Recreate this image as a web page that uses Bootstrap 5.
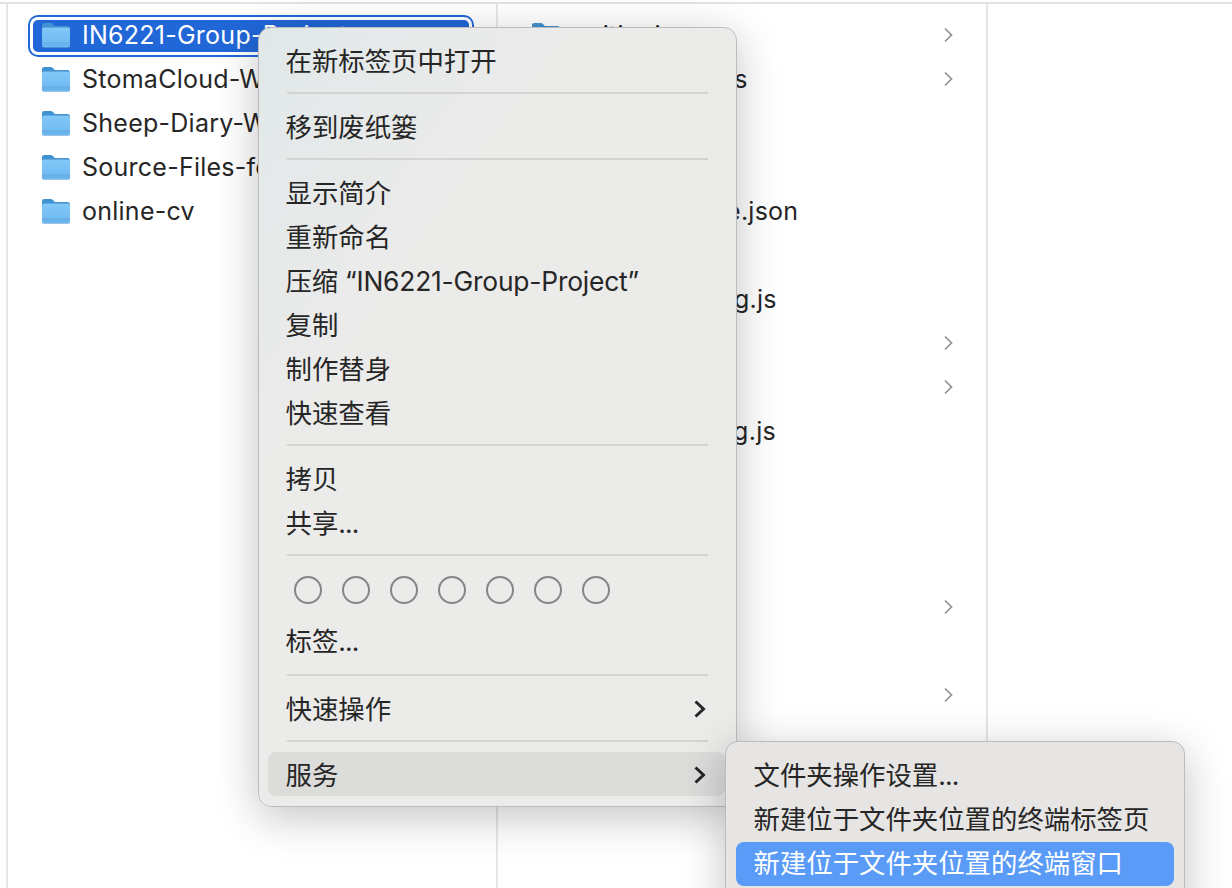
<!DOCTYPE html>
<html lang="zh-CN">

<head>
    <meta charset="UTF-8">
    <title>Finder</title>
    <meta name="viewport" content="width=device-width, initial-scale=1">
    <link href="https://cdn.jsdelivr.net/npm/bootstrap@5.3.0/dist/css/bootstrap.min.css" rel="stylesheet">
    <style>
        html, body { height: 888px; overflow: hidden; background: #fff; }
        body { font-family: Inter, "Noto Sans CJK SC", sans-serif; color: #262626; }
        .finder { height: 888px; margin-top: 2px; border-top: 2px solid #e4e4e4; }
        .edge { width: 8px; border-right: 2px solid #e6e6e6; }
        .pane { width: 490px; padding-top: 9px; border-right: 2px solid #e6e6e6; }
        .fi-row { height: 44px; padding: 5px 27px 5px 25px; font-size: 25px; letter-spacing: .25px; }
        .fi-inner { height: 34px; padding: 2px 0 0 8px; border-radius: 5px; white-space: nowrap; overflow: hidden; }
        .fi-inner svg.fold { width: 30px; height: 28px; margin: 0 11px 2px 0; flex: none; }
        .fi-inner.fi-sel {
            height: 32px; margin-top: 2px; padding-top: 0; overflow: visible; background: #2167d8; color: #fff;
            box-shadow: 0 0 0 3px #fff, 0 0 0 5px #2167d8;
        }
        .fi-more { width: 12px; height: 18px; margin: 0 5px 2px auto; flex: none; }
        .ctx.dropdown-menu {
            --bs-dropdown-min-width: 0;
            left: 258px; top: 27px; width: 479px; height: 780px; padding: 12px 0;
            font-size: 26.4px; color: #262626;
            background: linear-gradient(125deg, #e1e8e9 0, #ebebea 30%);
            border: 1px solid #bcbcbc; border-radius: 13px;
            box-shadow: 0 10px 44px rgba(0, 0, 0, .24);
        }
        .ctx .dropdown-item {
            height: 44px; padding: 0 12px 0 17.5px; margin: 0 11px 0 9px; width: auto; line-height: 42px;
            color: #262626; border-radius: 8px; letter-spacing: 0;
        }
        .ctx .dropdown-item.d-flex { padding: 2px 18px 0 17.5px; line-height: 42px; }
        .ctx .dropdown-divider { height: 2px; margin: 8px 28px 12px; border-top: 2px solid #d3d3d2; opacity: 1; }
        .ctx .divider-low { margin: 10px 28px; }
        .ctx .item-open { background: #dcdcdb; }
        .ctx .item-arrow { width: 14px; height: 20px; }
        .ctx .item-zip { letter-spacing: -.2px; }
        .ctx .dots { letter-spacing: -.9px; }
        .tag-row { height: 52px; padding: 8px 0 0 35px; gap: 20px; }
        .tag-dot { width: 28px; height: 28px; border: 2px solid #868686; border-radius: 50%; }
        .ctx.sub.dropdown-menu {
            left: 725px; top: 741px; width: 460px; height: 180px; background: #e6e5e3;
        }
        .ctx.sub .dropdown-item { margin: 0 10px; }
        .ctx.sub .dropdown-item.active { background: #5a9bf8; color: #fff; }
    </style>
</head>

<body>
    <svg width="0" height="0" class="position-absolute">
        <defs>
            <linearGradient id="foldBody" x1="0" y1="0" x2="0" y2="1">
                <stop offset="0" stop-color="#82c8f8"></stop>
                <stop offset="1" stop-color="#6db8f2"></stop>
            </linearGradient>
            <symbol id="fold" viewBox="0 0 30 28">
                <path d="M1 4.5C1 2.8 2 2 3.5 2h6.2c1 0 1.7.4 2.3 1l1.8 1.9h12.7c1.5 0 2.5 1 2.5 2.5V10H1z" fill="#3f92d4"></path>
                <rect x="1" y="6.5" width="28" height="20.5" rx="2" fill="#5c5c5c" opacity=".3"></rect>
                <rect x="1" y="6.5" width="28" height="20" rx="1.8" fill="url(#foldBody)"></rect>
                <rect x="1" y="21.5" width="28" height="1" fill="#5fa9e2"></rect>
                <rect x="1" y="23.5" width="28" height="1" fill="#62ade6"></rect>
            </symbol>
            <symbol id="more" viewBox="0 0 12 18">
                <path d="M3 2.5 9.5 9 3 15.5" fill="none" stroke="#929292" stroke-width="1.7"></path>
            </symbol>
            <symbol id="arrow" viewBox="0 0 14 20">
                <path d="M2.5 2.5 10.5 10 2.5 17.5" fill="none" stroke="#262626" stroke-width="3"></path>
            </symbol>
        </defs>
    </svg>

    <div class="finder d-flex">
        <div class="edge"></div>

        <div class="pane">
            <div class="fi-row"><div class="fi-inner fi-sel d-flex align-items-center"><svg class="fold"><use href="#fold"></use></svg>IN6221-Group-Project</div></div>
            <div class="fi-row"><div class="fi-inner d-flex align-items-center"><svg class="fold"><use href="#fold"></use></svg>StomaCloud-Web</div></div>
            <div class="fi-row"><div class="fi-inner d-flex align-items-center"><svg class="fold"><use href="#fold"></use></svg>Sheep-Diary-Web</div></div>
            <div class="fi-row"><div class="fi-inner d-flex align-items-center"><svg class="fold"><use href="#fold"></use></svg>Source-Files-for</div></div>
            <div class="fi-row"><div class="fi-inner d-flex align-items-center"><svg class="fold"><use href="#fold"></use></svg>online-cv</div></div>
        </div>

        <div class="pane">
            <div class="fi-row"><div class="fi-inner d-flex align-items-center"><svg class="fold"><use href="#fold"></use></svg>writingi<svg class="fi-more"><use href="#more"></use></svg></div></div>
            <div class="fi-row"><div class="fi-inner d-flex align-items-center"><svg class="fold"><use href="#fold"></use></svg>node_modules<svg class="fi-more"><use href="#more"></use></svg></div></div>
            <div class="fi-row"></div>
            <div class="fi-row"></div>
            <div class="fi-row"><div class="fi-inner d-flex align-items-center"><svg class="fold"><use href="#fold"></use></svg>package-core.json</div></div>
            <div class="fi-row"></div>
            <div class="fi-row"><div class="fi-inner d-flex align-items-center"><svg class="fold"><use href="#fold"></use></svg>postcss.config.js</div></div>
            <div class="fi-row"><div class="fi-inner d-flex align-items-center"><svg class="fi-more"><use href="#more"></use></svg></div></div>
            <div class="fi-row"><div class="fi-inner d-flex align-items-center"><svg class="fi-more"><use href="#more"></use></svg></div></div>
            <div class="fi-row"><div class="fi-inner d-flex align-items-center"><svg class="fold"><use href="#fold"></use></svg>tailwind.config.js</div></div>
            <div class="fi-row"></div>
            <div class="fi-row"></div>
            <div class="fi-row"></div>
            <div class="fi-row"><div class="fi-inner d-flex align-items-center"><svg class="fi-more"><use href="#more"></use></svg></div></div>
            <div class="fi-row"></div>
            <div class="fi-row"><div class="fi-inner d-flex align-items-center"><svg class="fi-more"><use href="#more"></use></svg></div></div>
        </div>
    </div>

    <div class="ctx dropdown-menu show">
        <a class="dropdown-item" href="#">在新标签页中打开</a>
        <hr class="dropdown-divider">
        <a class="dropdown-item" href="#">移到废纸篓</a>
        <hr class="dropdown-divider">
        <a class="dropdown-item" href="#">显示简介</a>
        <a class="dropdown-item" href="#">重新命名</a>
        <a class="dropdown-item item-zip" href="#">压缩 “IN6221-Group-Project”</a>
        <a class="dropdown-item" href="#">复制</a>
        <a class="dropdown-item" href="#">制作替身</a>
        <a class="dropdown-item" href="#">快速查看</a>
        <hr class="dropdown-divider">
        <a class="dropdown-item" href="#">拷贝</a>
        <a class="dropdown-item" href="#">共享<span class="dots">...</span></a>
        <hr class="dropdown-divider">
        <div class="tag-row d-flex">
            <span class="tag-dot"></span><span class="tag-dot"></span><span class="tag-dot"></span><span class="tag-dot"></span><span class="tag-dot"></span><span class="tag-dot"></span><span class="tag-dot"></span>
        </div>
        <a class="dropdown-item" href="#">标签<span class="dots">...</span></a>
        <hr class="dropdown-divider divider-low">
        <a class="dropdown-item d-flex justify-content-between align-items-center" href="#">快速操作<svg class="item-arrow"><use href="#arrow"></use></svg></a>
        <hr class="dropdown-divider divider-low">
        <a class="dropdown-item item-open d-flex justify-content-between align-items-center" href="#">服务<svg class="item-arrow"><use href="#arrow"></use></svg></a>
    </div>

    <div class="ctx sub dropdown-menu show">
        <a class="dropdown-item" href="#">文件夹操作设置<span class="dots">...</span></a>
        <a class="dropdown-item" href="#">新建位于文件夹位置的终端标签页</a>
        <a class="dropdown-item active" href="#">新建位于文件夹位置的终端窗口</a>
    </div>

    <script src="https://cdn.jsdelivr.net/npm/bootstrap@5.3.0/dist/js/bootstrap.bundle.min.js"></script>
</body>

</html>
